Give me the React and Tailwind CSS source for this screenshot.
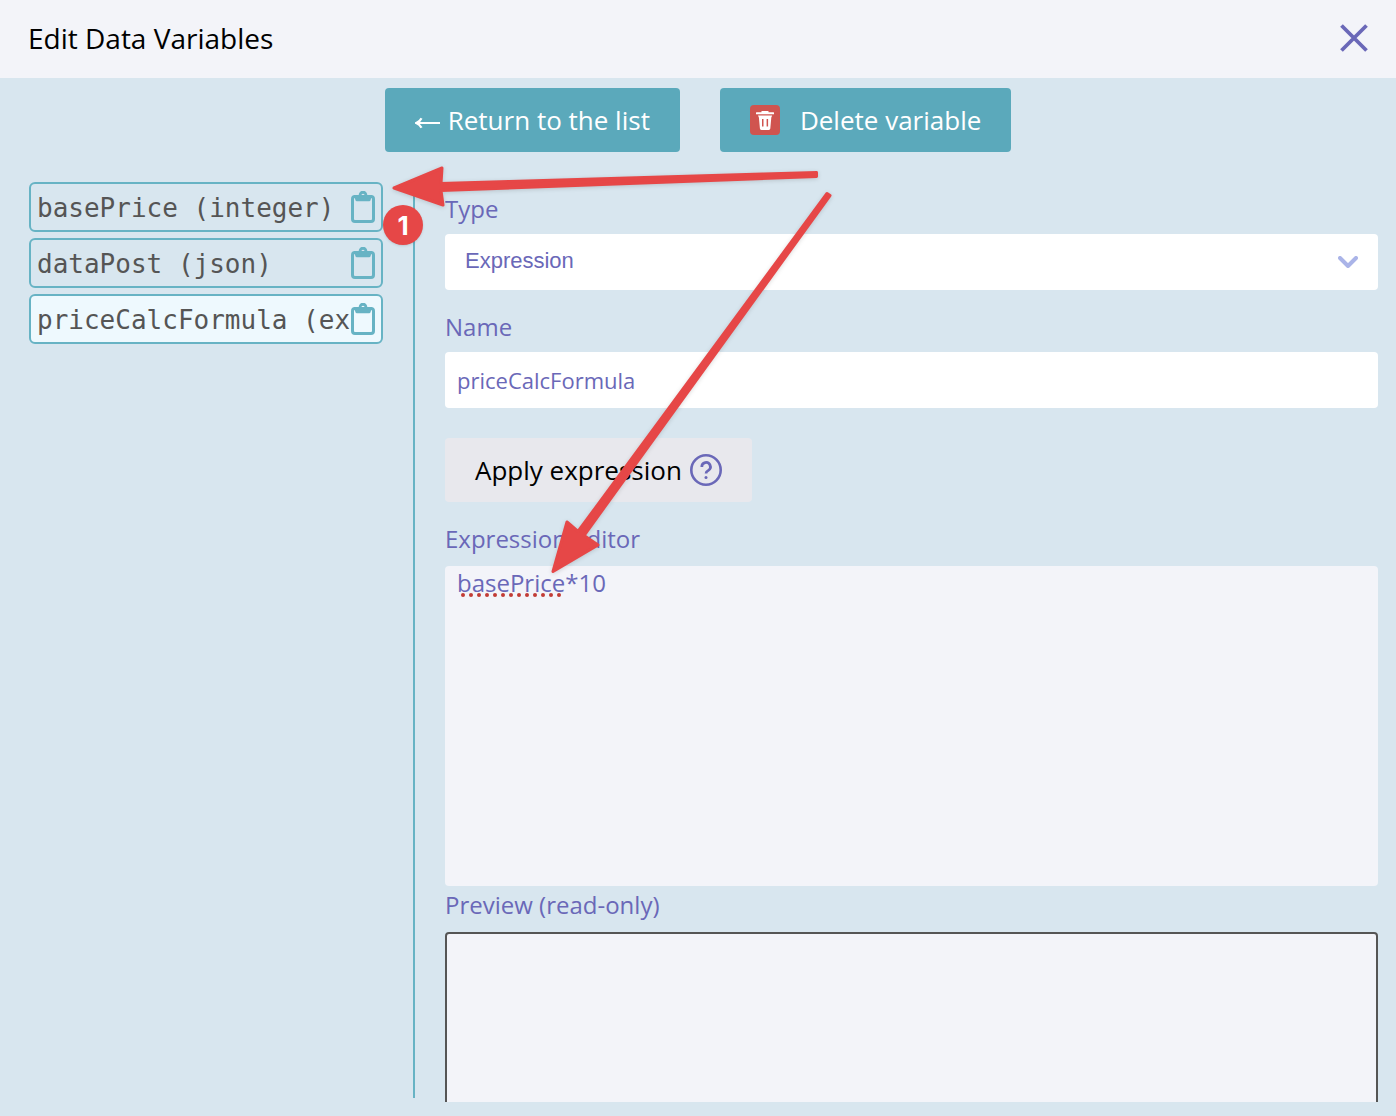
import { useState } from 'react';
import clsx from 'clsx';

const variables = [
  { name: 'basePrice', type: 'integer' },
  { name: 'dataPost', type: 'json' },
  { name: 'priceCalcFormula', type: 'expression' }
];

function ClipboardIcon() {
  return (
    <svg viewBox="0 0 24 32" className="h-8 w-6 text-[#67b3c4]" fill="none" aria-hidden="true">
      <rect x="1.5" y="5.5" width="21" height="25" rx="2.5" stroke="currentColor" strokeWidth="3" />
      <path
        fill="currentColor"
        fillRule="evenodd"
        d="M3 4h4.7a4.3 4.3 0 0 1 8.6 0H21l-1.4 5a1.6 1.6 0 0 1-1.6 1.2H6A1.6 1.6 0 0 1 4.4 9zM12 2.7a1.6 1.6 0 1 0 0 3.2 1.6 1.6 0 0 0 0-3.2z"
      />
    </svg>
  );
}

function TrashIcon() {
  return (
    <svg viewBox="0 0 30 30" className="size-[30px]" aria-hidden="true">
      <rect width="30" height="30" rx="4" fill="#d0544f" />
      <path fill="#fff" d="M12.5 5.9h5a1 1 0 0 1 1 1.4h5a.5.5 0 0 1 .5.5v1.5H6V7.8a.5.5 0 0 1 .5-.5h5a1 1 0 0 1 1-1.4z" />
      <path
        fill="#fff"
        fillRule="evenodd"
        d="M8 10.5h14.2l-.9 2-1 11a1.5 1.5 0 0 1-1.5 1.4h-7.4a1.5 1.5 0 0 1-1.5-1.4l-1-11zM12 14v7.5h1.5V14zM16.6 14v7.5h1.5V14z"
      />
    </svg>
  );
}

function HelpIcon() {
  return (
    <svg viewBox="0 0 32 32" className="size-8 text-[#6a68b8]" fill="none" aria-hidden="true">
      <circle cx="16" cy="16" r="14.7" stroke="currentColor" strokeWidth="2.6" />
      <path
        d="M11.8 13a4.3 4.3 0 1 1 6.6 3.4c-1.5.9-2.4 1.3-2.4 3"
        stroke="currentColor"
        strokeWidth="2.7"
      />
      <circle cx="16" cy="23.6" r="1.5" fill="currentColor" />
    </svg>
  );
}

function SpellingMarks({ count }) {
  return (
    <svg className="pointer-events-none absolute left-4 top-[27px] h-1 w-28" aria-hidden="true">
      {Array.from({ length: count }, (_, i) => (
        <circle key={i} cx={2 + i * 8} cy="2" r="2" fill="#c23b36" />
      ))}
    </svg>
  );
}

// Callout arrows and step number drawn on top of the dialog
function Annotations() {
  return (
    <div className="pointer-events-none absolute inset-0 overflow-hidden">
      <svg className="h-[620px] w-[860px] drop-shadow-sm" aria-hidden="true">
        <g fill="#e64747" stroke="#e64747" strokeWidth="3" strokeLinejoin="round">
          <path d="M394 188 442 168 441 183.5 816.5 172.5 816.5 176.5 441 190.5 443 205z" />
          <path d="M553 571.5 567 522 578 531.5 827 193.5 830 195.5 584 535.5 598 545z" />
        </g>
      </svg>
      <span className="absolute left-[383px] top-[205px] flex size-10 items-center justify-center rounded-full bg-[#e64747] font-['Inter',sans-serif] text-[26px] font-bold text-white shadow-sm">
        1
      </span>
    </div>
  );
}

export default function App() {
  const [selected, setSelected] = useState('priceCalcFormula');
  const [name, setName] = useState('priceCalcFormula');
  const [expression, setExpression] = useState('basePrice*10');

  return (
    <div className="relative flex h-screen flex-col overflow-hidden bg-[#d8e6ef] font-['Open_Sans','Noto_Sans',sans-serif]">
      <header className="flex h-[78px] shrink-0 items-center justify-between bg-[#f3f4f9] px-7 pb-0.5">
        <h1 className="text-[28px] text-black">Edit Data Variables</h1>
        <button type="button" aria-label="Close">
          <svg viewBox="0 0 28 28" className="size-7" aria-hidden="true">
            <path d="M1.5 1.5l25 25M26.5 1.5l-25 25" stroke="#6a68b8" strokeWidth="3.8" />
          </svg>
        </button>
      </header>

      <div className="flex shrink-0 justify-center gap-10 pt-2.5 text-[26px] text-white">
        <button type="button" className="flex h-16 items-center gap-2 rounded-sm bg-[#5ba9bb] px-[30px]">
          <svg viewBox="0 0 25 14" className="mt-1.5 h-3.5 w-[25px]" fill="none" aria-hidden="true">
            <path d="M25 7H2" stroke="#fff" strokeWidth="2" />
            <path d="M6.5 2.2Q5 5.5 1.2 7 5 8.5 6.5 11.8" stroke="#fff" strokeWidth="2.2" />
          </svg>
          Return to the list
        </button>
        <button type="button" className="flex h-16 items-center gap-5 rounded-sm bg-[#5ba9bb] px-[30px]">
          <TrashIcon />
          Delete variable
        </button>
      </div>

      <main className="flex min-h-0 flex-1 pt-[30px] pr-[18px] pb-3.5 pl-[29px]">
        <nav className="w-[386px] shrink-0 pb-1">
          <ul className="flex h-full flex-col gap-1.5 border-r-2 border-[#67b3c4] pr-[30px]">
            {variables.map((variable) => (
              <li
                key={variable.name}
                className={clsx(
                  'flex h-[50px] items-center rounded-md border-2 border-[#67b3c4] px-1.5',
                  selected === variable.name && 'bg-[#eef9fe]'
                )}
              >
                <button
                  type="button"
                  onClick={() => setSelected(variable.name)}
                  className="min-w-0 flex-1 overflow-hidden whitespace-nowrap pt-0.5 text-left font-['DejaVu_Sans_Mono',monospace] text-[26px] text-[#555]"
                >
                  {variable.name} ({variable.type})
                </button>
                <button type="button" aria-label={`Copy ${variable.name}`}>
                  <ClipboardIcon />
                </button>
              </li>
            ))}
          </ul>
        </nav>

        <form className="ml-[30px] flex min-w-0 flex-1 flex-col overflow-hidden pt-2.5 text-2xl text-[#6a68b8]">
          <label htmlFor="type" className="mb-2 leading-[34px]">
            Type
          </label>
          <div className="relative shrink-0">
            <select
              id="type"
              className="block h-14 w-full appearance-none rounded-sm bg-white px-5 pb-0.5 font-['Liberation_Sans',sans-serif] text-[22px]"
            >
              <option>Expression</option>
            </select>
            <svg
              viewBox="0 0 20 12"
              className="pointer-events-none absolute right-5 top-[22px] h-3 w-5"
              fill="none"
              aria-hidden="true"
            >
              <path d="M2 2l8 8 8-8" stroke="#aab4e8" strokeWidth="4" strokeLinecap="round" strokeLinejoin="round" />
            </svg>
          </div>

          <label htmlFor="name" className="mt-5 mb-2 leading-[34px]">
            Name
          </label>
          <input
            id="name"
            type="text"
            value={name}
            onChange={(event) => setName(event.target.value)}
            className="h-14 w-full shrink-0 rounded-sm bg-white px-3 text-[22px]"
          />

          <button
            type="button"
            className="mt-[30px] flex h-16 shrink-0 items-center gap-2 self-start rounded-sm bg-[#e8e8ed] px-[30px] text-[26px] text-black"
          >
            Apply expression
            <HelpIcon />
          </button>

          <label htmlFor="expression" className="mt-5 mb-2.5 leading-[34px]">
            Expression Editor
          </label>
          <div className="relative h-80 shrink-0">
            <textarea
              id="expression"
              value={expression}
              spellCheck={false}
              onChange={(event) => setExpression(event.target.value)}
              className="block h-full w-full resize-none rounded-sm bg-[#f3f4f9] px-3 leading-[34px]"
            />
            <SpellingMarks count={13} />
          </div>

          <label htmlFor="preview" className="mt-0.5 mb-2.5 leading-[34px]">
            Preview (read-only)
          </label>
          <textarea
            id="preview"
            readOnly
            className="block h-80 w-full shrink-0 resize-none rounded-sm border-2 border-[#555] bg-[#f3f4f9] px-3"
          />
        </form>
      </main>

      <Annotations />
    </div>
  );
}
